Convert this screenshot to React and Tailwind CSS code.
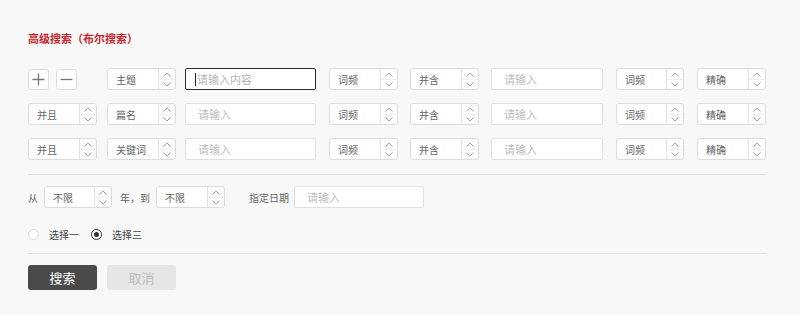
import React from "react";

const FONT = { fontFamily: '"Noto Sans CJK SC", "Noto Sans", sans-serif' };

function Arrows() {
  return (
    <div className="flex w-[17px] flex-col border-l border-[#e2e2e2]">
      <div className="flex h-1/2 items-center justify-center">
        <svg width="8" height="5" viewBox="0 0 8 5" fill="none">
          <path d="M0.5 4.5 L4 1 L7.5 4.5" stroke="#9a9a9a" strokeWidth="0.9" />
        </svg>
      </div>
      <div className="flex h-1/2 items-center justify-center border-t border-[#eeeeee]">
        <svg width="8" height="5" viewBox="0 0 8 5" fill="none">
          <path d="M0.5 0.5 L4 4 L7.5 0.5" stroke="#9a9a9a" strokeWidth="0.9" />
        </svg>
      </div>
    </div>
  );
}

function Select({ label, w = "w-[69px]", cls = "" }) {
  return (
    <div className={`flex h-[22px] ${w} shrink-0 rounded-[3px] border border-[#dcdcdc] bg-white ${cls}`}>
      <div className="flex flex-1 items-center pl-[8px] text-[10px] text-[#666]">{label}</div>
      <Arrows />
    </div>
  );
}

function Input({ w, placeholder = "请输入", cls = "", focused = false }) {
  if (focused) {
    return (
      <div className={`flex h-[22px] ${w} shrink-0 items-center rounded-[2px] border border-[#2a2a2a] bg-white pl-[9px] ${cls}`}>
        <div className="h-[13px] w-px bg-[#222]" />
        <span className="ml-px text-[11px] text-[#b5b5b5]">{placeholder}</span>
      </div>
    );
  }
  return (
    <div className={`flex h-[22px] ${w} shrink-0 items-center rounded-[2px] border border-[#e0e0e0] bg-white pl-[12px] text-[11px] text-[#bdbdbd] ${cls}`}>
      {placeholder}
    </div>
  );
}

function IconBtn({ children, cls = "" }) {
  return (
    <div className={`flex h-[21px] w-[21px] items-center justify-center rounded-[3px] border border-[#dcdcdc] bg-white ${cls}`}>
      {children}
    </div>
  );
}

function Row({ first, logic, field, focused, placeholder }) {
  return (
    <div className="flex h-[22px] items-center">
      {first ? (
        <div className="flex w-[69px] shrink-0 items-center">
          <IconBtn>
            <svg width="13" height="13" viewBox="0 0 13 13">
              <path d="M6.5 0.5 V12.5 M0.5 6.5 H12.5" stroke="#777" strokeWidth="1.3" />
            </svg>
          </IconBtn>
          <IconBtn cls="ml-[7px]">
            <svg width="13" height="13" viewBox="0 0 13 13">
              <path d="M0.5 6.5 H12.5" stroke="#777" strokeWidth="1.3" />
            </svg>
          </IconBtn>
        </div>
      ) : (
        <Select label={logic} />
      )}
      <Select label={field} cls="ml-[10px]" />
      <Input w="w-[131px]" cls="ml-[9px]" focused={focused} placeholder={placeholder} />
      <Select label="词频" cls="ml-[13px]" />
      <Select label="并含" cls="ml-[12px]" />
      <Input w="w-[112px]" cls="ml-[12px]" />
      <Select label="词频" w="w-[68px]" cls="ml-[13px]" />
      <Select label="精确" cls="ml-[13px]" />
    </div>
  );
}

export default function App() {
  return (
    <div className="h-[315px] w-[800px] bg-[#f8f8f8] pl-[28px] pt-[31px]" style={FONT}>
      <div className="h-[14px] text-[11px] leading-[14px] font-semibold text-[#c4262d]">高级搜索（布尔搜索）</div>
      <div className="mt-[23px] flex flex-col gap-[13px]">
        <Row first field="主题" focused placeholder="请输入内容" />
        <Row logic="并且" field="篇名" />
        <Row logic="并且" field="关键词" />
      </div>
      <div className="mt-[14px] h-px w-[738px] bg-[#e0e0e0]" />
      <div className="mt-[11px] flex h-[22px] items-center text-[10px] text-[#666]">
        <span>从</span>
        <Select label="不限" w="w-[68px]" cls="ml-[6px]" />
        <span className="ml-[8px]">年，到</span>
        <Select label="不限" cls="ml-[6px]" />
        <span className="ml-[24px]">指定日期</span>
        <Input w="w-[130px]" cls="ml-[5px]" />
      </div>
      <div className="mt-[19px] flex h-[14px] items-center text-[10px] text-[#444]">
        <div className="h-[11px] w-[11px] rounded-full border border-[#d8d8d8] bg-white" />
        <span className="ml-[10px]">选择一</span>
        <div className="ml-[12px] flex h-[11px] w-[11px] items-center justify-center rounded-full border border-[#333] bg-white">
          <div className="h-[5px] w-[5px] rounded-full bg-[#333]" />
        </div>
        <span className="ml-[10px]">选择三</span>
      </div>
      <div className="mt-[12px] h-px w-[738px] bg-[#e0e0e0]" />
      <div className="mt-[11px] flex h-[25px] items-center">
        <div className="flex h-[25px] w-[69px] items-center justify-center rounded-[3px] bg-[#4a4a4a] text-[13px] text-white">搜索</div>
        <div className="ml-[10px] flex h-[25px] w-[69px] items-center justify-center rounded-[3px] bg-[#e6e6e6] text-[13px] text-[#bcbcbc]">取消</div>
      </div>
    </div>
  );
}
